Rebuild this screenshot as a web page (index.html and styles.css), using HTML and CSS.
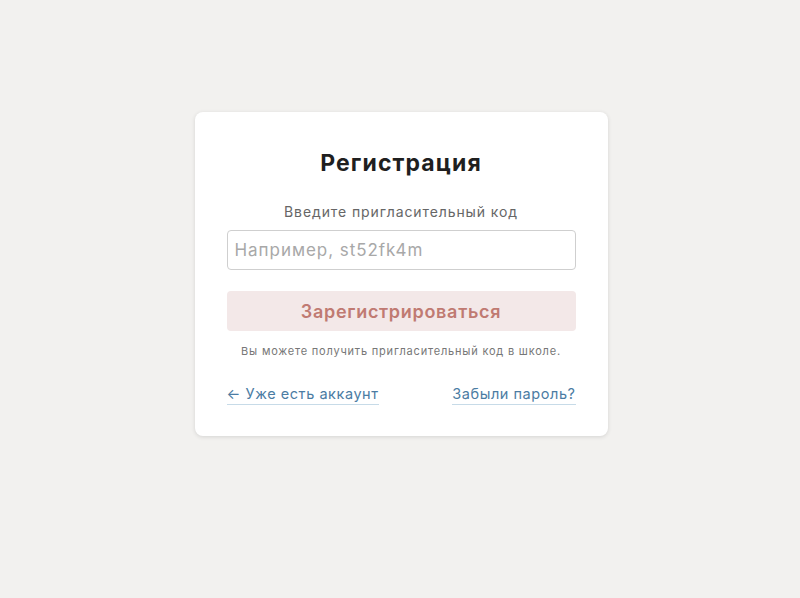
FILE: index.html
```html
<!DOCTYPE html>
<html lang="ru">
<head>
<meta charset="utf-8">
<link rel="stylesheet" href="styles.css">
</head>
<body>
<main class="page">
  <section class="card">
    <h1 class="title">Регистрация</h1>
    <label class="label" for="code">Введите пригласительный код</label>
    <input class="input" id="code" type="text" placeholder="Например, st52fk4m">
    <button class="button" type="button">Зарегистрироваться</button>
    <p class="hint">Вы можете получить пригласительный код в школе.</p>
    <div class="links">
      <a class="link" href="#">← Уже есть аккаунт</a>
      <a class="link" href="#">Забыли пароль?</a>
    </div>
  </section>
</main>
</body>
</html>
```

FILE: styles.css
```css
* { box-sizing: border-box; }
html, body {
  margin: 0;
  padding: 0;
  height: 100%;
  background: #f2f1ef;
  font-family: Inter, "Noto Sans", sans-serif;
}
.page {
  min-height: 100%;
  display: flex;
  justify-content: center;
  padding-top: 112px;
  padding-left: 2px;
}
.card {
  width: 413px;
  height: 324px;
  background: #ffffff;
  border-radius: 8px;
  box-shadow: 0 1px 4px rgba(0,0,0,0.12);
  padding: 36px 32px 0;
  display: flex;
  flex-direction: column;
  align-items: stretch;
}
.title {
  margin: 0;
  font-size: 23px;
  line-height: 30px;
  font-weight: 700;
  letter-spacing: 1.1px;
  color: #1f1f1f;
  text-align: center;
}
.label {
  margin-top: 24px;
  font-size: 14px;
  line-height: 20px;
  letter-spacing: 0.9px;
  color: #666;
  text-align: center;
}
.input {
  margin-top: 8px;
  height: 40px;
  width: 100%;
  border: 1px solid #cfcfcf;
  border-radius: 4px;
  padding: 0 7px;
  font-family: inherit;
  font-size: 17px;
  letter-spacing: 0.95px;
  color: #333;
  outline: none;
}
.input::placeholder { color: #a8a8a8; }
.button {
  margin-top: 21px;
  height: 40px;
  width: 100%;
  border: none;
  border-radius: 4px;
  background: #f3e8e8;
  color: #c07a72;
  font-family: inherit;
  font-size: 18px;
  font-weight: 600;
  letter-spacing: 0.7px;
}
.hint {
  margin: 12px 0 0;
  font-size: 11px;
  line-height: 16px;
  letter-spacing: 0.8px;
  color: #777;
  text-align: center;
}
.links {
  margin-top: 25px;
  display: flex;
  justify-content: space-between;
}
.link {
  font-size: 14.5px;
  line-height: 20px;
  letter-spacing: 0.55px;
  color: #4b7ca3;
  text-decoration: none;
  border-bottom: 1px solid #c7dbe8;
}
```
